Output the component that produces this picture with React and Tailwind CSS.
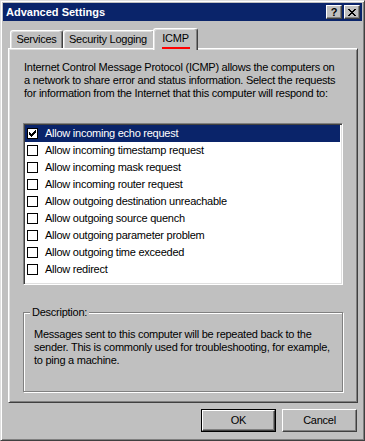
import React from "react";

const items = [
  "Allow incoming echo request",
  "Allow incoming timestamp request",
  "Allow incoming mask request",
  "Allow incoming router request",
  "Allow outgoing destination unreachable",
  "Allow outgoing source quench",
  "Allow outgoing parameter problem",
  "Allow outgoing time exceeded",
  "Allow redirect",
];

function Check({ checked }) {
  return (
    <div className="w-[11px] h-[11px] border border-black bg-white flex items-center justify-center shrink-0">
      {checked && (
        <svg width="9" height="9" viewBox="0 0 9 9" shapeRendering="crispEdges">
          <path d="M1 3h1v1h1v1h1v-1h1v-1h1v-1h1v-1h1v3h-1v1h-1v1h-1v1h-1v1h-1v-1h-1v-1h-1z" fill="#000" />
        </svg>
      )}
    </div>
  );
}

function TitleBtn({ children }) {
  return (
    <div className="w-[16px] h-[14px] bg-[#c0c0c0] border border-t-white border-l-white border-r-[#404040] border-b-[#404040] shadow-[inset_-1px_-1px_#808080] flex items-center justify-center">
      {children}
    </div>
  );
}

function Button({ children, isDefault }) {
  return (
    <div className={isDefault ? "border border-black" : ""}>
      <div
        className={
          "bg-[#c0c0c0] border border-t-white border-l-white border-r-[#404040] border-b-[#404040] shadow-[inset_-1px_-1px_#808080] flex items-center justify-center " +
          (isDefault ? "w-[73px] h-[21px]" : "w-[75px] h-[23px]")
        }
      >
        {children}
      </div>
    </div>
  );
}

export default function App() {
  return (
    <div className="w-[365px] h-[441px] bg-[#c0c0c0] border border-t-[#dfdfdf] border-l-[#dfdfdf] border-r-[#404040] border-b-[#404040] shadow-[inset_1px_1px_#fff,inset_-1px_-1px_#808080] p-[2px] flex flex-col font-['Liberation_Sans',Arial,sans-serif] text-[11px] leading-[13px] tracking-[-0.25px] whitespace-nowrap text-black">
      {/* Title bar */}
      <div className="h-[18px] bg-[#0a246a] flex items-center justify-between pl-[3px] pr-[2px]">
        <span className="text-white font-bold text-[11px] tracking-normal">Advanced Settings</span>
        <div className="flex gap-[2px]">
          <TitleBtn>
            <span className="font-bold text-[11px] leading-[11px] text-black">?</span>
          </TitleBtn>
          <TitleBtn>
            <svg width="8" height="7" viewBox="0 0 8 7" shapeRendering="crispEdges">
              <path d="M0 0h2v1h1v1h2v-1h1v-1h2v1h-1v1h-1v1h-1v1h1v1h1v1h1v1h-2v-1h-1v-1h-2v1h-1v1h-2v-1h1v-1h1v-1h1v-1h-1v-1h-1v-1h-1z" fill="#000" />
            </svg>
          </TitleBtn>
        </div>
      </div>

      {/* Tabs */}
      <div className="ml-[5px] mt-[7px] h-[20px] flex items-end pl-[2px] relative z-10">
        <div className="w-[53px] h-[18px] bg-[#c0c0c0] border-t border-l border-r border-t-white border-l-white border-r-[#404040] shadow-[inset_-1px_0_#808080,inset_1px_1px_#dfdfdf] rounded-t-[3px] flex items-center justify-center">
          Services
        </div>
        <div className="w-[92px] h-[18px] bg-[#c0c0c0] border-t border-l border-r border-t-white border-l-white border-r-[#404040] shadow-[inset_-1px_0_#808080,inset_1px_1px_#dfdfdf] rounded-t-[3px] flex items-center justify-center pr-[2px]">
          Security Logging
        </div>
        <div className="ml-[-2px] w-[45px] h-[22px] mb-[-2px] bg-[#c0c0c0] border-t border-l border-r border-t-white border-l-white border-r-[#404040] shadow-[inset_-1px_0_#808080,inset_1px_1px_#dfdfdf] rounded-t-[3px] flex flex-col items-center pt-[3px] relative z-10">
          <span>ICMP</span>
          <div className="w-[28px] h-[2px] bg-[#ff0000] mt-[2px]"></div>
        </div>
      </div>

      {/* Panel */}
      <div className="ml-[5px] w-[350px] h-[355px] bg-[#c0c0c0] border border-t-white border-l-white border-r-[#404040] border-b-[#404040] shadow-[inset_1px_1px_#dfdfdf,inset_-1px_-1px_#808080] pl-[14px] pt-[12px] flex flex-col">
        <p className="pl-[1px]">
          Internet Control Message Protocol (ICMP) allows the computers on
          <br />
          a network to share error and status information. Select the requests
          <br />
          for information from the Internet that this computer will respond to:
        </p>

        <div className="mt-[23px] w-[320px] h-[162px] bg-white border border-t-[#808080] border-l-[#808080] border-r-white border-b-white shadow-[inset_1px_1px_#404040,inset_-1px_-1px_#dfdfdf] p-[1px] pr-[2px] pt-[1px]">
          {items.map((t, i) => (
            <div
              key={t}
              className={
                "h-[17px] flex items-center pl-[2px] gap-[7px] " +
                (i === 0 ? "bg-[#0a246a] text-white" : "")
              }
            >
              <Check checked={i === 0} />
              <span className="leading-[13px]">{t}</span>
            </div>
          ))}
        </div>

        <div className="relative mt-[27px] w-[320px] h-[80px] border border-[#808080] shadow-[inset_1px_1px_#fff,1px_1px_#fff] pl-[10px] pt-[15px]">
          <span className="absolute -top-[7px] left-[6px] px-[2px] bg-[#c0c0c0]">Description:</span>
          <p>
            Messages sent to this computer will be repeated back to the
            <br />
            sender. This is commonly used for troubleshooting, for example,
            <br />
            to ping a machine.
          </p>
        </div>
      </div>

      {/* Buttons */}
      <div className="mt-[6px] flex justify-end gap-[6px] pr-[5px]">
        <Button isDefault>OK</Button>
        <Button>Cancel</Button>
      </div>
    </div>
  );
}
